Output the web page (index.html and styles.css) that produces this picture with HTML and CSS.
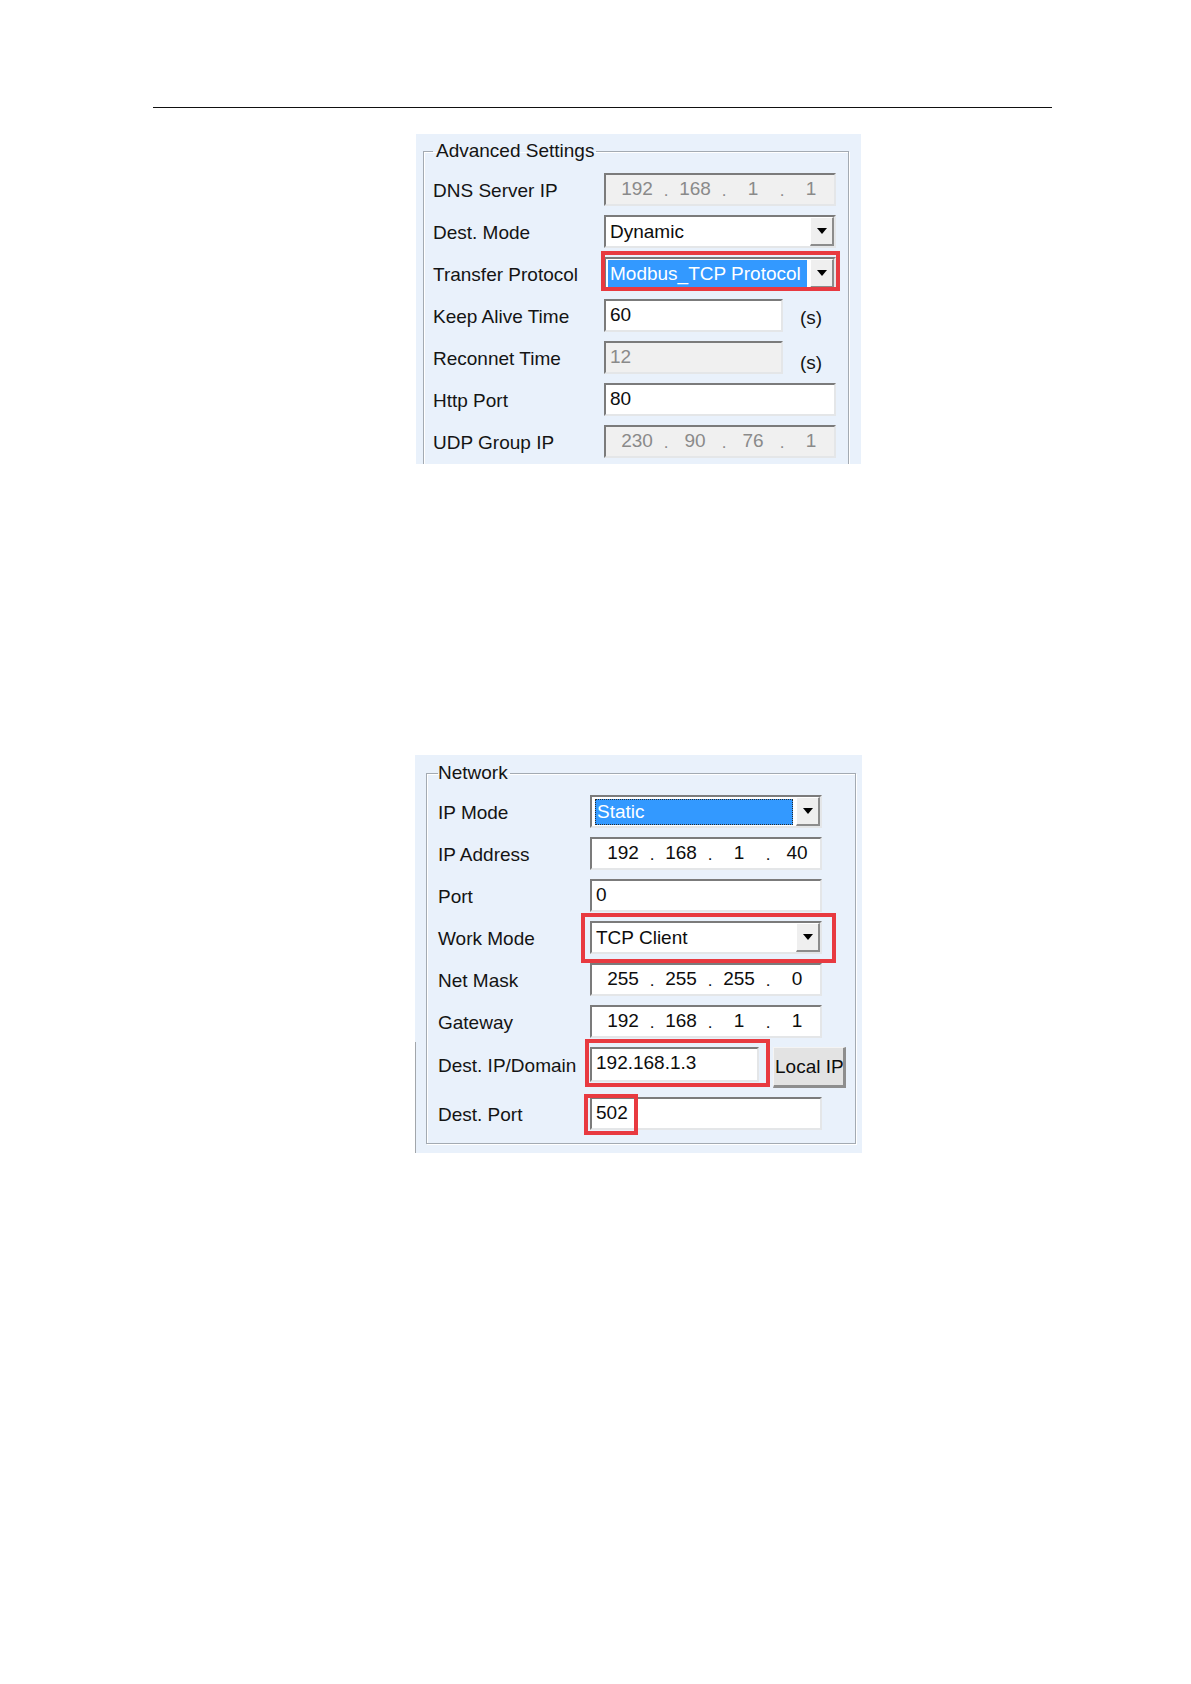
FILE: index.html
```html
<!DOCTYPE html>
<html>
<head>
<meta charset="utf-8">
<title>Settings</title>
<link rel="stylesheet" href="styles.css">
</head>
<body>
<div class="page">
  <div class="rule"></div>

  <div class="panel panel-adv">
    <fieldset class="group group-open">
      <legend>Advanced Settings</legend>
      <div class="form form-adv">
        <div class="lbl">DNS Server IP</div>
        <div class="field ip disabled">
          <span class="seg">192</span><span class="dot">.</span><span class="seg">168</span><span class="dot">.</span><span class="seg">1</span><span class="dot">.</span><span class="seg">1</span>
        </div>

        <div class="lbl">Dest. Mode</div>
        <div class="field select"><span class="val">Dynamic</span><span class="btn"><i class="tri"></i></span></div>

        <div class="lbl">Transfer Protocol</div>
        <div class="mark mark-proto">
          <div class="field select"><span class="val sel sel-proto">Modbus_TCP Protocol</span><span class="btn"><i class="tri"></i></span></div>
        </div>

        <div class="lbl">Keep Alive Time</div>
        <div class="cell">
          <div class="field text short">60</div><span class="unit unit-1">(s)</span>
        </div>

        <div class="lbl">Reconnet Time</div>
        <div class="cell">
          <div class="field text short disabled">12</div><span class="unit unit-2">(s)</span>
        </div>

        <div class="lbl">Http Port</div>
        <div class="field text">80</div>

        <div class="lbl">UDP Group IP</div>
        <div class="field ip disabled">
          <span class="seg">230</span><span class="dot">.</span><span class="seg">90</span><span class="dot">.</span><span class="seg">76</span><span class="dot">.</span><span class="seg">1</span>
        </div>
      </div>
    </fieldset>
  </div>

  <div class="panel panel-net">
    <fieldset class="group">
      <legend>Network</legend>
      <div class="form form-net">
        <div class="lbl">IP Mode</div>
        <div class="field select"><span class="val sel sel-mode">Static</span><span class="btn"><i class="tri"></i></span></div>

        <div class="lbl">IP Address</div>
        <div class="field ip">
          <span class="seg">192</span><span class="dot">.</span><span class="seg">168</span><span class="dot">.</span><span class="seg">1</span><span class="dot">.</span><span class="seg">40</span>
        </div>

        <div class="lbl">Port</div>
        <div class="field text">0</div>

        <div class="lbl">Work Mode</div>
        <div class="mark mark-work">
          <div class="field select"><span class="val">TCP Client</span><span class="btn"><i class="tri"></i></span></div>
        </div>

        <div class="lbl">Net Mask</div>
        <div class="field ip">
          <span class="seg">255</span><span class="dot">.</span><span class="seg">255</span><span class="dot">.</span><span class="seg">255</span><span class="dot">.</span><span class="seg">0</span>
        </div>

        <div class="lbl">Gateway</div>
        <div class="field ip">
          <span class="seg">192</span><span class="dot">.</span><span class="seg">168</span><span class="dot">.</span><span class="seg">1</span><span class="dot">.</span><span class="seg">1</span>
        </div>

        <div class="lbl lbl-dest">Dest. IP/Domain</div>
        <div class="cell cell-dest">
          <div class="mark mark-destip">
            <div class="field text dest-ip">192.168.1.3</div>
          </div>
          <div class="button">Local IP</div>
        </div>

        <div class="lbl">Dest. Port</div>
        <div class="mark mark-port">
          <div class="field text">502</div>
        </div>
      </div>
    </fieldset>
  </div>
</div>
</body>
</html>
```

FILE: styles.css
```css
*, *::before, *::after { box-sizing: border-box; }

html, body {
  margin: 0;
  padding: 0;
  background: #ffffff;
}

body {
  font-family: "Liberation Sans", Arial, sans-serif;
  font-size: 19px;
  color: #141414;
}

.page {
  width: 1191px;
  padding-top: 107px;
}

.rule {
  margin-left: 153px;
  width: 899px;
  height: 1px;
  background: #111111;
}

.panel {
  background: #e9f1fb;
  position: relative;
}

.panel-adv {
  margin-top: 26px;
  margin-left: 416px;
  width: 445px;
  height: 330px;
  padding: 6px 12px 0 7px;
  overflow: hidden;
}

.panel-net {
  margin-top: 291px;
  margin-left: 415px;
  width: 447px;
  padding: 7px 6px 9px 11px;
}

.panel-net::before {
  content: "";
  position: absolute;
  left: 0;
  top: 287px;
  bottom: 0;
  width: 1px;
  background: #a2a6ab;
}

.group {
  margin: 0;
  min-width: 0;
  border: 1px solid #a3aab2;
  box-shadow: inset 1px 1px 0 #ffffff, 1px 1px 0 #ffffff;
}

.panel-adv .group {
  padding: 11px 0 40px 9px;
  border-bottom: none;
  height: 360px;
}

.panel-net .group {
  padding: 11px 0 13px 11px;
}

.group legend {
  font-size: 19px;
  line-height: 22px;
  padding: 0 2px 0 0;
  color: #141414;
}

.panel-adv .group legend {
  padding-left: 3px;
}

.form {
  display: grid;
  row-gap: 9px;
  align-items: center;
}

.form-adv { grid-template-columns: 171px 232px; }
.form-net { grid-template-columns: 152px 232px; }

.lbl {
  white-space: nowrap;
  line-height: 22px;
  padding-top: 2px;
}

.lbl-dest { align-self: start; padding-top: 8px; }

.field {
  height: 33px;
  background: #ffffff;
  border-style: solid;
  border-width: 2px;
  border-color: #7b7b7b #e4e6e8 #e4e6e8 #7b7b7b;
  color: #0d0d0d;
  white-space: nowrap;
  overflow: hidden;
}

.field.disabled {
  background: #f0f0f0;
  color: #8a8a8a;
}

.text {
  padding-left: 4px;
  line-height: 27px;
}

.short { width: 179px; }

.cell {
  display: flex;
  align-items: center;
}

.unit {
  margin-left: 17px;
  line-height: 22px;
  color: #141414;
}
.unit-1 { margin-top: 4px; }
.unit-2 { margin-top: 10px; }

/* IP address control */
.ip {
  display: flex;
  padding-left: 8px;
  line-height: 27px;
}
.ip .seg {
  width: 46px;
  text-align: center;
}
.ip .dot {
  width: 12px;
  text-align: center;
  line-height: 31px;
  font-size: 17px;
}

/* combo box */
.select {
  display: flex;
  align-items: stretch;
}
.select .val {
  flex: 1;
  padding-left: 4px;
  line-height: 29px;
}
.select .sel {
  background: #3399ff;
  color: #ffffff;
}
.sel-proto {
  margin: 1px 3px 1px 2px;
  padding-left: 2px !important;
  line-height: 27px !important;
}
.sel-mode {
  margin: 2px 3px 1px 3px;
  padding-left: 2px !important;
  line-height: 26px !important;
  outline: 1px dotted #2a2a2a;
  outline-offset: -1px;
}
.select .btn {
  width: 24px;
  background: #efefef;
  border-style: solid;
  border-width: 1px 2px 2px 1px;
  border-color: #ffffff #8c8c8c #8c8c8c #ffffff;
  display: flex;
  align-items: center;
  justify-content: center;
}
.tri {
  display: block;
  width: 0;
  height: 0;
  border-left: 5px solid transparent;
  border-right: 5px solid transparent;
  border-top: 6px solid #000000;
}

/* red highlight marks */
.mark {
  position: relative;
}
.mark::after {
  content: "";
  position: absolute;
  border: 4px solid #e83a40;
  pointer-events: none;
}
.mark-proto::after { top: -6px; bottom: -1px; left: -3px; right: -4px; }
.mark-work::after  { top: -8px; bottom: -9px; left: -9px; right: -14px; }
.mark-destip::after { top: -8px; bottom: -5px; left: -5px; right: -11px; }
.mark-port::after  { top: -3px; bottom: -5px; left: -6px; width: 54px; }

.cell-dest {
  align-items: flex-start;
  height: 41px;
}
.dest-ip {
  width: 169px;
  height: 35px;
  line-height: 27px;
}
.button {
  margin-left: 14px;
  width: 73px;
  height: 41px;
  flex: none;
  background: #e3e3e3;
  border-style: solid;
  border-width: 1px 3px 3px 1px;
  border-color: #f4f4f4 #8e8e8e #8e8e8e #f4f4f4;
  padding-left: 1px;
  line-height: 37px;
  white-space: nowrap;
  overflow: hidden;
  color: #0d0d0d;
}
```
